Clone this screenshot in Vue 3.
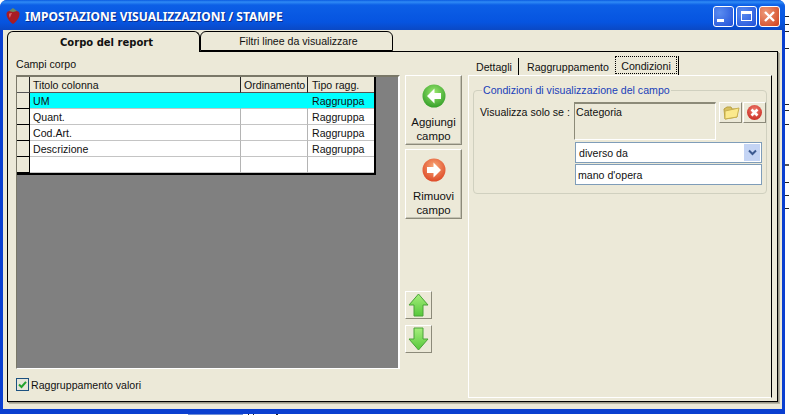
<script setup>
const rows = [
  { t: 'UM', o: '', g: 'Raggruppa', sel: true },
  { t: 'Quant.', o: '', g: 'Raggruppa' },
  { t: 'Cod.Art.', o: '', g: 'Raggruppa' },
  { t: 'Descrizione', o: '', g: 'Raggruppa' },
  { t: '', o: '', g: '' },
]
const tickGaps = [16, 7, 6, 16, 55, 5, 13, 39, 16, 12, 12]
</script>

<template>
  <div class="page">
    <div class="top">
      <div class="window">
        <header class="titlebar">
          <svg class="appicon" width="18" height="18" viewBox="0 0 18 18">
            <path d="M2.5 7 C2.5 4 6 3.5 9 3.5 C12 3.5 15.5 4 15.5 7 C15.5 11 12 15 9 17 C6 15 2.5 11 2.5 7Z" fill="#a81c24" />
            <path d="M5 7 C5 6 7 6 8 6 C7 8 6 10 6 11 C5 10 5 8 5 7Z" fill="#d8606a" />
            <path d="M5 4 L9 1 L13 4 L9 5Z" fill="#6a8a60" />
          </svg>
          <span class="title">IMPOSTAZIONE VISUALIZZAZIONI / STAMPE</span>
          <div class="winbtns">
            <div class="wb"><i class="min"></i></div>
            <div class="wb"><i class="max"></i></div>
            <div class="wb close">
              <svg width="13" height="13" viewBox="0 0 13 13"><path d="M2 2 L11 11 M11 2 L2 11" stroke="#fff" stroke-width="2.4" /></svg>
            </div>
          </div>
        </header>

        <div class="client">
          <div class="tabs">
            <div class="tab active">Corpo del report</div>
            <div class="tab">Filtri linee da visualizzare</div>
          </div>
          <div class="panel">
            <div class="left">
              <div class="caption">Campi corpo</div>
              <div class="gridwrap">
                <table class="grid">
                  <colgroup>
                    <col class="c0" /><col class="c1" /><col class="c2" /><col class="c3" />
                  </colgroup>
                  <thead>
                    <tr><th></th><th>Titolo colonna</th><th>Ordinamento</th><th>Tipo ragg.</th></tr>
                  </thead>
                  <tbody>
                    <tr v-for="(r, i) in rows" :key="i" :class="{ sel: r.sel }">
                      <td class="rh"></td><td>{{ r.t }}</td><td>{{ r.o }}</td><td>{{ r.g }}</td>
                    </tr>
                  </tbody>
                </table>
              </div>
              <label class="check">
                <span class="box">
                  <svg width="11" height="11" viewBox="0 0 11 11"><path d="M2 5.5 L4.5 8 L9 2.8" fill="none" stroke="#22a32e" stroke-width="2" /></svg>
                </span>
                Raggruppamento valori
              </label>
            </div>

            <div class="middle">
              <div class="bigbtn">
                <svg width="26" height="26" viewBox="0 0 26 26">
                  <defs>
                    <radialGradient id="gb" cx="50%" cy="35%" r="70%"><stop offset="0" stop-color="#9be870" /><stop offset="1" stop-color="#2e9a24" /></radialGradient>
                  </defs>
                  <circle cx="13" cy="13" r="11.5" fill="url(#gb)" />
                  <path d="M13.5 5.5 L6 13 L13.5 20.5 V16 H20 V10 H13.5Z" fill="#fff" />
                </svg>
                <span>Aggiungi<br />campo</span>
              </div>
              <div class="bigbtn">
                <svg width="26" height="26" viewBox="0 0 26 26">
                  <defs>
                    <radialGradient id="rb" cx="50%" cy="35%" r="70%"><stop offset="0" stop-color="#f8a878" /><stop offset="1" stop-color="#dc4422" /></radialGradient>
                  </defs>
                  <circle cx="13" cy="13" r="11.5" fill="url(#rb)" />
                  <path d="M12.5 5.5 L20 13 L12.5 20.5 V16 H6 V10 H12.5Z" fill="#fff" />
                </svg>
                <span>Rimuovi<br />campo</span>
              </div>
              <div class="arrows">
                <div class="smallbtn">
                  <svg width="21" height="24" viewBox="0 0 21 24">
                    <defs>
                      <linearGradient id="ga" x1="0" y1="0" x2="0" y2="1"><stop offset="0" stop-color="#a6ee7c" /><stop offset="1" stop-color="#56c83a" /></linearGradient>
                    </defs>
                    <path d="M10.5 1 L20 12 H15 V23 H6 V12 H1Z" fill="url(#ga)" stroke="#4aa238" />
                  </svg>
                </div>
                <div class="smallbtn">
                  <svg width="21" height="24" viewBox="0 0 21 24">
                    <path d="M10.5 23 L20 12 H15 V1 H6 V12 H1Z" fill="url(#ga)" stroke="#4aa238" />
                  </svg>
                </div>
              </div>
            </div>

            <div class="right">
              <div class="subtabs">
                <div class="subtab first">Dettagli</div>
                <div class="subtab mid">Raggruppamento</div>
                <div class="subtab on"><span>Condizioni</span></div>
              </div>
              <div class="subpanel">
                <fieldset class="group">
                  <legend>Condizioni di visualizzazione del campo</legend>
                  <div class="cond">
                    <div class="lbl">Visualizza solo se :</div>
                    <div class="fields">
                      <div class="line1">
                        <div class="memo">Categoria</div>
                        <div class="icbtn">
                          <svg width="18" height="17" viewBox="0 0 18 17">
                            <path d="M2 5 L5 3 H9 L10 5 H15 V13 L3 15 Z" fill="#d8c060" stroke="#b8a040" />
                            <path d="M3 7 L17 4 L15 13 L3 15Z" fill="#fbe98c" stroke="#c8b050" />
                          </svg>
                        </div>
                        <div class="icbtn">
                          <svg width="17" height="17" viewBox="0 0 17 17">
                            <defs>
                              <radialGradient id="xb" cx="50%" cy="35%" r="70%"><stop offset="0" stop-color="#f08070" /><stop offset="1" stop-color="#c82820" /></radialGradient>
                            </defs>
                            <circle cx="8.5" cy="8.5" r="7.5" fill="url(#xb)" />
                            <path d="M5.5 5.5 L11.5 11.5 M11.5 5.5 L5.5 11.5" stroke="#fff" stroke-width="2.6" />
                          </svg>
                        </div>
                      </div>
                      <div class="select">
                        <span>diverso da</span>
                        <i class="drop">
                          <svg width="11" height="8" viewBox="0 0 11 8"><path d="M2 1.5 L5.5 5 L9 1.5" fill="none" stroke="#3c5a90" stroke-width="2" /></svg>
                        </i>
                      </div>
                      <div class="input">mano d'opera</div>
                    </div>
                  </div>
                </fieldset>
              </div>
            </div>
          </div>
        </div>
      </div>
      <div class="edge">
        <i v-for="(g, i) in tickGaps" :key="i" :class="{ thick: i === 7 }" :style="{ marginTop: g + 'px' }"></i>
      </div>
    </div>
    <div class="strip"><b class="bar"></b><b class="t a"></b><b class="t b"></b><b class="t c"></b></div>
  </div>
</template>

<style>
html, body { margin: 0; background: #fff; }
</style>

<style scoped>
.page {
  width: 789px;
  height: 415px;
  overflow: hidden;
  background: #fff;
  font-family: "Liberation Sans", Arial, sans-serif;
  font-size: 10.6px;
  color: #111;
}
.top { display: flex; height: 414px; }
.edge { width: 4px; display: flex; flex-direction: column; }
.edge i { display: block; height: 1px; background: #222; flex: none; }
.edge i.thick { height: 2px; background: #555; }
.strip { display: flex; height: 1px; padding-left: 188px; }
.strip .bar { width: 55px; background: #6f8fd8; }
.strip .t { width: 1px; background: #222; }
.strip .a { margin-left: 5px; }
.strip .b { margin-left: 4px; }
.strip .c { margin-left: 22px; width: 2px; }
.window {
  width: 785px;
  height: 414px;
  flex: none;
  box-sizing: border-box;
  background: #0a3fd0;
  border-radius: 7px 7px 0 0;
  padding: 0 3px 5px;
  display: flex;
  flex-direction: column;
}
.titlebar {
  height: 30px;
  box-sizing: border-box;
  flex: none;
  margin: 0 -3px;
  padding: 2px 4px 0 4px;
  border-radius: 7px 7px 0 0;
  background: linear-gradient(#0a5ae0 0, #2f8bf5 2px, #0c5fe6 5px, #0654e0 22px, #0a48c4 30px);
  display: flex;
  align-items: center;
  gap: 3px;
}
.appicon { flex: none; }
.title {
  font-family: "Noto Sans", sans-serif;
  font-weight: 700;
  font-size: 12px;
  color: #fff;
  flex: 1;
  text-shadow: 1px 1px 0 #0a2f90;
}
.winbtns { display: flex; gap: 2px; margin-right: 1px; }
.wb {
  width: 21px;
  height: 21px;
  box-sizing: border-box;
  border: 1px solid #fff;
  border-radius: 3px;
  background: radial-gradient(circle at 30% 30%, #5a8cf0, #2050d8);
  display: flex;
  align-items: center;
  justify-content: center;
  position: relative;
}
.wb .min { width: 7px; height: 3px; background: #fff; align-self: flex-end; margin: 0 7px 4px 0; }
.wb .max { width: 11px; height: 10px; box-sizing: border-box; border: 1px solid #fff; border-top-width: 3px; }
.wb.close { background: radial-gradient(circle at 30% 30%, #ee9a78, #d0401c); }
.client {
  flex: 1;
  background: #ece9d8;
  padding: 1px 3px 6px 4px;
  display: flex;
  flex-direction: column;
  min-height: 0;
}
.tabs { display: flex; height: 20px; flex: none; position: relative; z-index: 1; }
.tab {
  width: 193px;
  box-sizing: border-box;
  height: 20px;
  border: 1px solid #000;
  border-radius: 6px 6px 0 0;
  text-align: center;
  line-height: 18px;
  padding-left: 4px;
  background: #ece9d8;
}
.tab.active {
  height: 21px;
  border-bottom: none;
  font-weight: 700;
  font-size: 10px;
  font-family: "DejaVu Sans", sans-serif;
  line-height: 22px;
  padding-left: 6px;
}
.panel {
  flex: 1;
  min-height: 0;
  box-sizing: border-box;
  border: 1px solid #000;
  box-shadow: 1px 1px 0 #9c9a8a, 2px 2px 0 #b8b6a6;
  display: flex;
  padding: 0 0 0 8px;
  margin-right: 1px;
  margin-bottom: 1px;
}
.left { width: 384px; flex: none; display: flex; flex-direction: column; }
.caption { height: 23px; line-height: 23px; padding-top: 1px; box-sizing: border-box; }
.gridwrap {
  width: 384px;
  height: 294px;
  box-sizing: border-box;
  background: #808080;
  border-top: 2px solid #7a7868;
  border-left: 1px solid #7a7868;
  border-right: 2px solid #fff;
  border-bottom: 1px solid #fff;
}
.grid {
  border-collapse: separate;
  border-spacing: 0;
  table-layout: fixed;
  width: 359px;
  background: #fff;
  border-right: 2px solid #000;
  border-bottom: 2px solid #000;
}
.c0 { width: 13px; }
.c1 { width: 211px; }
.c2 { width: 67px; }
.c3 { width: 66px; }
.grid th, .grid td {
  height: 16px;
  box-sizing: border-box;
  padding: 0 0 0 3px;
  font-weight: 400;
  text-align: left;
  white-space: nowrap;
  overflow: hidden;
  line-height: 14px;
  border-right: 1px solid #b4b4b4;
  border-bottom: 1px solid #c4c4c4;
}
.grid th {
  background: #ece9d8;
  border-right: 1px solid #222;
  border-bottom: 1px solid #555;
}
.grid th:last-child, .grid td:last-child { border-right: none; padding-left: 4px; }
.grid td.rh {
  background: #ece9d8;
  border-right: 1px solid #000;
  border-bottom: 1px solid #000;
}
.grid tr.sel td:not(.rh) { background: #00ffff; border-right-color: #00ffff; }
.check {
  display: flex;
  align-items: center;
  gap: 2px;
  margin-top: 9px;
}
.box {
  width: 13px;
  height: 13px;
  box-sizing: border-box;
  border: 1px solid #1c5180;
  background: #e6e6da;
  display: flex;
  align-items: center;
  justify-content: center;
}
.middle {
  width: 57px;
  margin-left: 5px;
  flex: none;
  display: flex;
  flex-direction: column;
  gap: 4px;
  padding-top: 23px;
}
.bigbtn {
  width: 57px;
  height: 70px;
  box-sizing: border-box;
  border: 1px solid;
  border-color: #fff #8c8a7a #8c8a7a #fff;
  background: #ece9d8;
  box-shadow: inset -1px -1px 0 #c4c2b2;
  display: flex;
  flex-direction: column;
  align-items: center;
  padding-top: 7px;
  text-align: center;
  font-size: 11.4px;
  line-height: 14px;
  gap: 6px;
}
.arrows { display: flex; flex-direction: column; gap: 6px; margin-top: 68px; }
.smallbtn {
  width: 27px;
  height: 28px;
  box-sizing: border-box;
  border: 1px solid;
  border-color: #fff #8c8a7a #8c8a7a #fff;
  background: #ece9d8;
  display: flex;
  align-items: center;
  justify-content: center;
}
.right {
  flex: 1;
  min-width: 0;
  margin-left: 6px;
  display: flex;
  flex-direction: column;
}
.subtabs { display: flex; height: 23px; flex: none; align-items: flex-end; padding-left: 8px; }
.subtab { height: 17px; line-height: 19px; }
.subtab.first { width: 42px; border-right: 1px solid #000; margin-right: 8px; }
.subtab.mid { width: 88px; }
.subtab.on { height: 19px; border-right: 1px solid #000; padding-right: 1px; }
.subtab.on span {
  display: block;
  width: 62px;
  height: 18px;
  box-sizing: border-box;
  border: 1px dotted #000;
  text-align: center;
  line-height: 19px;
}
.subpanel {
  flex: 1;
  box-sizing: border-box;
  border-top: 1px solid #fff;
  border-left: 1px solid #fff;
  border-bottom: 1px solid #fff;
  border-right: 1px solid #000;
  margin-right: 5px;
  margin-bottom: 3px;
  padding: 8px 4px 0 4px;
}
.group {
  margin: 0;
  padding: 5px 0 0 6px;
  height: 110px;
  box-sizing: border-box;
  border: 1px solid #d0d0bf;
  border-radius: 4px;
}
.group legend {
  color: #1a3fb8;
  padding: 0 1px;
  margin-left: 2px;
  line-height: 13px;
}
.cond { display: flex; }
.lbl { width: 94px; flex: none; padding-top: 4px; line-height: 13px; }
.fields { display: flex; flex-direction: column; }
.line1 { display: flex; gap: 1px; height: 40px; }
.memo {
  width: 142px;
  height: 38px;
  box-sizing: border-box;
  border-top: 2px solid #8c8a78;
  border-left: 1px solid #8c8a78;
  border-right: 1px solid #fff;
  border-bottom: 1px solid #fff;
  padding: 2px 1px;
  line-height: 13px;
  margin-right: 2px;
}
.icbtn {
  width: 23px;
  height: 21px;
  box-sizing: border-box;
  border: 1px solid;
  border-color: #fff #8c8a7a #8c8a7a #fff;
  display: flex;
  align-items: center;
  justify-content: center;
}
.select, .input {
  width: 187px;
  height: 21px;
  flex: none;
  box-sizing: border-box;
  border: 1px solid #7f9db9;
  background: #fff;
  display: flex;
  align-items: center;
  margin-left: 1px;
}
.select { padding-left: 3px; }
.input { padding-left: 2px; margin-top: 1px; }
.select span { flex: 1; }
.drop {
  width: 16px;
  height: 17px;
  margin-right: 1px;
  background: #c4d4f4;
  display: flex;
  align-items: center;
  justify-content: center;
}
</style>
